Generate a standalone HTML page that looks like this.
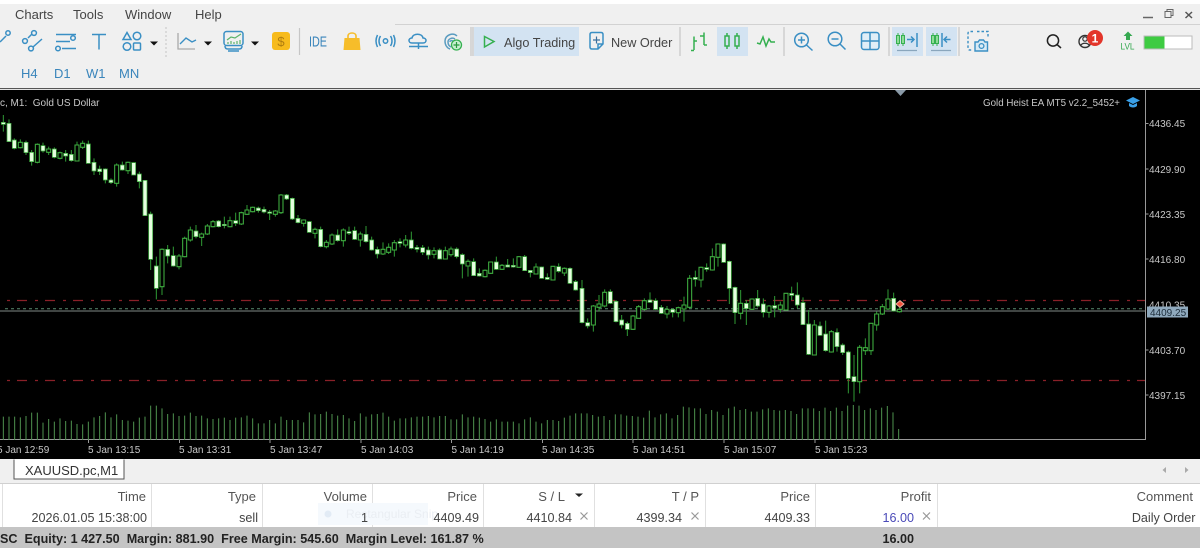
<!DOCTYPE html>
<html><head><meta charset="utf-8"><title>MT5</title>
<style>
html,body{margin:0;padding:0;width:1200px;height:551px;overflow:hidden;background:#fff}
svg{display:block;filter:blur(.35px)}
text{font-family:"Liberation Sans",sans-serif}
.m{font-size:13px;fill:#444}
.tf{font-size:13px;fill:#3a85bb}
.c{font-size:10px;fill:#c8c8c8}
.h{font-size:13px;fill:#555;text-anchor:end}
.r{font-size:12.6px;fill:#444;text-anchor:end}
.s{font-size:12.6px;font-weight:bold;fill:#222}
.x{stroke:#999;stroke-width:1.2;fill:none}
.b{fill:none;stroke:#3a8fc4;stroke-width:1.5}
.g{fill:none;stroke:#35b050;stroke-width:1.5}
.w{fill:none;stroke:#2f9a35;stroke-width:3}
.f{fill:#e6ffe0;stroke:#3fae40;stroke-width:2.2}
.o{fill:#000;stroke:#3fae40;stroke-width:3.2}
.sep{stroke:#c6c6c6;stroke-width:1.2}
</style></head><body>
<svg width="1200" height="551" viewBox="0 0 1200 551" xmlns="http://www.w3.org/2000/svg">
<rect width="1200" height="551" fill="#fff"/>
<rect y="4" width="1200" height="84" fill="#f0f0f0"/>
<path d="M395 24.500H1200" stroke="#d2d2d2"/>
<text class="m" x="15" y="19">Charts</text><text class="m" x="73" y="19">Tools</text><text class="m" x="125" y="19">Window</text><text class="m" x="195" y="19">Help</text>
<path d="M1143 17.500h10" stroke="#666" stroke-width="1.500"/>
<path d="M1165 11.500h6v6h-6zM1167 11v-1.500h6v6h-2" fill="none" stroke="#666"/>
<path d="M1185.500 12l6.500 6M1192 12l-6.500 6" stroke="#555" stroke-width="1.500"/>

<rect x="474" y="27" width="105" height="29" fill="#d3e3f2"/>
<rect x="717" y="27" width="31" height="29" fill="#d3e3f2"/>
<rect x="892" y="27" width="31" height="29" fill="#d3e3f2"/>
<rect x="926" y="27" width="31" height="29" fill="#d3e3f2"/>

<path class="b" d="M0 42l6-6"/><circle class="b" cx="8" cy="33" r="2.200"/>
<path class="b" d="M28 38l4-4M33 47l9-8"/><circle class="b" cx="34" cy="33" r="2.400"/><circle class="b" cx="25" cy="41" r="2.400"/><circle class="b" cx="31" cy="48.500" r="2.400"/>
<path class="b" d="M56 34.500h20M56 41.500h14M62 48.500h14"/><circle class="b" cx="73" cy="38" r="2.300"/><circle class="b" cx="58" cy="48.500" r="2.300"/>
<path class="b" d="M92 34.500h14M99 34.500v15"/>
<path class="b" d="M127 32.500l4 7h-8z"/><circle class="b" cx="137" cy="36" r="3.800"/><circle class="b" cx="127" cy="46.500" r="3.800"/><rect class="b" x="133.500" y="43" width="7" height="7" rx="1"/>
<path d="M150 41.500h8l-4 4z" fill="#111"/>
<path d="M166 27V57" stroke="#c4c4c4" stroke-dasharray="2 2"/>
<path d="M178 33V49H195" fill="none" stroke="#aaa" stroke-width="1.300"/>
<path d="M180 44l6-6 6 4 4-2" fill="none" stroke="#3a8fc4" stroke-width="1.400"/>
<path d="M204 41.500h8l-4 4z" fill="#111"/>
<rect class="b" x="224" y="31.500" width="19" height="14" rx="2.500" fill="#e8f4fa"/>
<path class="b" d="M225 46c0 2 1 3 3 3h11c2 0 3-1 3-3M228 51h11"/>
<path d="M227 40l4-3 4 1 6-4" fill="none" stroke="#5cb46a" stroke-width="1.200"/>
<path d="M228 44v-2M231 44v-3M234 44v-2M237 44v-3M240 44v-4" stroke="#5cb46a" stroke-width="1.200"/>
<path d="M251 41.500h8l-4 4z" fill="#111"/>
<rect x="272" y="32" width="18" height="18" rx="3" fill="#f7bb1c"/>
<text x="281" y="46" font-size="13" text-anchor="middle" fill="#b07d10">$</text>
<path class="sep" d="M299.500 28V55"/>
<text x="309" y="46.500" font-size="15" textLength="18" lengthAdjust="spacingAndGlyphs" fill="#3a85bb">IDE</text>
<path d="M344.500 38h15l1 12h-17z" fill="#f6bd2a"/><path d="M348 39v-3c0-4 8-4 8 0v3" fill="none" stroke="#f6bd2a" stroke-width="1.600"/>
<circle class="b" cx="385.500" cy="41" r="2.200"/>
<path class="b" d="M380.500 36c-2 3-2 7 0 10M390.500 36c2 3 2 7 0 10M377.500 35c-2 4-2 8 0 12M393.500 35c2 4 2 8 0 12" stroke-width="1.200"/>
<path class="b" d="M412 43c-4 0-4-5 0-5 1-5 10-5 11 0 4 0 4 5 0 5zM409 46.500h19M418.500 43v6"/>
<path d="M457 36c-4-4-12-1-12 5 0 4 2 7 5 8M455 39c-3-2-7 0-7 3 0 2 1 4 3 5M453 41c-2-1-3 0-3 1" fill="none" stroke="#5a9cc0" stroke-width="1.500"/>
<circle cx="456.500" cy="45" r="5" fill="#c8efd0" stroke="#35b050" stroke-width="1.300"/><path d="M456.500 42v6M453.500 45h6" stroke="#2a9a40" stroke-width="1.200"/>
<path class="sep" d="M471 27V56M473 27V56"/>
<path d="M484.500 36.500l9.500 5-9.500 5.500z" fill="none" stroke="#35b050" stroke-width="1.500"/>
<text x="504" y="47" font-size="12.700" fill="#444">Algo Trading</text>
<path class="b" d="M603 44V34.500q0-2-2-2h-9q-2 0-2 2V47q0 2 2 2h6zM603 44h-5v5"/><path d="M596.500 36.500v7M593 40h7" stroke="#3a6f9c" stroke-width="1.200"/>
<text x="611" y="47" font-size="12.700" fill="#444">New Order</text>
<path class="sep" d="M680 27V56"/>
<path class="g" d="M694 36.500V50M691 50.500h3M694 41h3M704 32.500V45M700 36h4M704 45h3"/>
<path d="M727 33v3M727 46v3M737 33v3M737 46v3" stroke="#35b050" stroke-width="1.500"/><rect class="g" x="725" y="36" width="4" height="10" fill="none"/><rect class="g" x="735" y="36" width="4" height="10"/>
<path class="g" d="M757 43l3 1 3-7 3 9 3-7 2 3 4 0"/>
<path class="sep" d="M784 27V56"/>
<circle class="b" cx="801.500" cy="40" r="6.800"/><path class="b" d="M806.500 45l6 5.500M798 40h7M801.500 36.500v7"/>
<circle class="b" cx="835" cy="39" r="6.800"/><path class="b" d="M840 44l5.500 5.500M831.500 39h7"/>
<rect x="861.500" y="32.500" width="17.500" height="17" rx="2.500" fill="#e0eef7" stroke="#3a8fc4" stroke-width="1.500"/><path class="b" d="M870 33v16M862 41h17"/>
<path class="sep" d="M889 27V56"/>
<path d="M898 33v13M903 33v13" stroke="#35b050" stroke-width="1"/><rect x="896.500" y="35.500" width="3" height="8" fill="#8fdc98" stroke="#35b050"/><rect x="901.500" y="35.500" width="3" height="8" fill="#8fdc98" stroke="#35b050"/>
<path class="b" d="M907 39.500h7M911 36.500l3 3-3 3M917 33V47" stroke-width="1.300"/><path d="M897 50.500h20" stroke="#8aa6bd" stroke-width="1.200"/>
<path d="M933 33v13M937 33v13" stroke="#35b050" stroke-width="1"/><rect x="931.500" y="35.500" width="3" height="8" fill="#8fdc98" stroke="#35b050"/><rect x="935.500" y="35.500" width="3" height="8" fill="#8fdc98" stroke="#35b050"/>
<path class="b" d="M942 33V47M950.500 39.500h-6.500M947 36.500l-3 3 3 3" stroke-width="1.300"/><path d="M931 50.500h20" stroke="#8aa6bd" stroke-width="1.200"/>
<path class="sep" d="M959 27V56"/>
<path d="M973 31.500h-3q-2 0-2 2V48q0 2 2 2h3M977 31.500h11V38" fill="none" stroke="#3a8fc4" stroke-width="1.400" stroke-dasharray="2.500 2"/>
<path d="M975 42h3l1.500-2h4l1.500 2h2.500v9H975z" fill="#d8eaf5" stroke="#3a8fc4" stroke-width="1.400"/><circle cx="981.500" cy="46" r="2.400" fill="none" stroke="#3a8fc4" stroke-width="1.300"/>
<circle cx="1053" cy="40.500" r="5.600" fill="none" stroke="#222" stroke-width="1.500"/><path d="M1057 44.500l4 3.500" stroke="#222" stroke-width="1.500"/>
<circle cx="1085" cy="41.500" r="6" fill="none" stroke="#333" stroke-width="1.400"/><circle cx="1085" cy="39" r="2.200" fill="none" stroke="#333" stroke-width="1.200"/><path d="M1080.500 45.500c2-3 7-3 9 0" fill="none" stroke="#333" stroke-width="1.200"/>
<circle cx="1095" cy="38" r="8" fill="#e3352a"/><text x="1095" y="42.500" font-size="12" font-weight="bold" text-anchor="middle" fill="#fff">1</text>
<path d="M1128 31.500l4.500 4.500h-2.500v4h-4v-4h-2.500z" fill="#35a850"/><text x="1127.500" y="49.500" font-size="9.500" text-anchor="middle" fill="#35a850" textLength="14" lengthAdjust="spacingAndGlyphs">LVL</text>
<rect x="1144" y="36" width="48" height="13" fill="#fff" stroke="#bbb"/><rect x="1144.500" y="36.500" width="20" height="12" fill="#3ecb42"/>

<text class="tf" x="-16" y="78">H1</text><text class="tf" x="21" y="78">H4</text><text class="tf" x="54" y="78">D1</text><text class="tf" x="86" y="78">W1</text><text class="tf" x="119" y="78">MN</text>

<rect y="88" width="1200" height="1" fill="#555"/><rect y="89" width="1200" height="1" fill="#e4e4e4"/>
<rect y="90" width="1200" height="369" fill="#000"/>
<path d="M0 439.500H1145.500V90" fill="none" stroke="#999"/>
<path d="M895 90h11l-5.500 6z" fill="#8a9aa8"/>
<text class="c" x="0" y="106" xml:space="preserve" style="white-space:pre">c, M1:  Gold US Dollar</text>
<text class="c" x="1120" y="106" text-anchor="end" textLength="137" lengthAdjust="spacingAndGlyphs">Gold Heist EA MT5 v2.2_5452+</text>
<path d="M1133 97l7 3.500-7 3.500-7-3.500z" fill="#3aa0e8"/><path d="M1129 103v3c2 2 6 2 8 0v-3l-4 2z" fill="#3aa0e8"/>

<path d="M-11 300.500H1145M-11 380.500H1145" stroke="#8a2028" stroke-width="1.300" stroke-dasharray="10 8 3 7"/>
<path d="M5 308.800H1145" stroke="#5a8a70" stroke-dasharray="3 3"/>
<path d="M0 311H1145" stroke="#7f8a86"/>

<g transform="translate(0,400) scale(.33333)" fill="none" stroke="#4f934f" stroke-width="3">
<path d="M10 50V120M27 50V120M44 50V120M61 52V120M78 48V120M95 38V120M112 38V120M129 68V120M146 57V120M163 65V120M180 55V120M197 63V120M214 62V120M231 72V120M248 73V120M265 65V120M282 52V120M299 48V120M316 37V120M333 52V120M350 43V120M367 60V120M384 62V120M401 65V120M418 53V120M435 50V120M452 17V120M469 17V120M486 25V120M503 42V120M520 40V120M537 48V120M554 47V120M571 38V120M588 48V120M605 47V120M622 55V120M639 57V120M656 55V120M673 53V120M690 60V120M707 53V120M724 52V120M741 47V120M758 55V120M775 70V120M792 70V120M809 60V120M826 70V120M843 50V120M860 60V120M877 60V120M894 60V120M911 67V120M928 37V120M945 43V120M962 42V120M979 35V120M996 42V120M1013 47V120M1030 45V120M1047 55V120M1064 63V120M1081 40V120M1098 50V120M1115 43V120M1132 42V120M1149 38V120M1166 50V120M1183 62V120"/>
<path d="M1200 55V120M1217 55V120M1234 52V120M1251 50V120M1268 50V120M1285 48V120M1302 52V120M1319 48V120M1336 48V120M1353 58V120M1370 58V120M1387 43V120M1404 52V120M1421 50V120M1438 53V120M1455 57V120M1472 65V120M1489 58V120M1506 65V120M1523 65V120M1540 65V120M1557 70V120M1574 58V120M1591 52V120M1608 65V120M1625 70V120M1642 60V120M1659 60V120M1676 63V120M1693 53V120M1710 47V120M1727 40V120M1744 40V120M1761 40V120M1778 45V120M1795 50V120M1812 48V120M1829 60V120M1846 43V120M1863 43V120M1880 47V120M1897 48V120M1914 50V120M1931 53V120M1948 32V120M1965 52V120M1982 43V120M1999 40V120M2016 55V120M2033 45V120M2050 20V120M2067 22V120M2084 25V120M2101 25V120M2118 42V120M2135 30V120M2152 35V120M2169 45V120M2186 25V120M2203 20V120M2220 30V120M2237 27V120M2254 35V120M2271 35V120M2288 28V120M2305 25V120M2322 30V120M2339 32V120M2356 30V120M2373 33V120M2390 42V120"/>
<path d="M2407 25V120M2424 25V120M2441 25V120M2458 33V120M2475 23V120M2492 33V120M2509 23V120M2526 33V120M2543 17V120M2560 15V120M2577 17V120M2594 30V120M2611 25V120M2628 30V120M2645 23V120M2662 18V120M2679 37V120M2696 87V120"/>
</g>

<g transform="translate(0,100) scale(.33333)">
<path class="w" d="M10 45V95M27 58V125M43 115V148M61 118V145M78 122V165M95 150V197M112 130V190M129 128V158M146 140V165M163 142V175M180 155V178M197 150V185M214 150V185M231 125V183M248 122V147M265 122V190M282 175V225M299 197V225M316 205V250M333 235V252M350 190V260M367 185V212M384 185V222M401 187V225M418 215V265M435 240V347M452 335V510M469 470V598M486 445V585M503 435V490M520 440V500M537 462V508M554 410V472M571 380V425M588 375V415M605 398V438M622 372V405M639 360V382M656 360V382M673 350V385M690 350V382M707 338V378M724 335V375M741 315V345M758 320V337M775 320V338M792 320V340M809 330V360M826 330V350M843 282V342M860 282V300M877 293V360M894 345V370"/>
<path class="f" d="M4 67h12V73h-12zM21 70h12V125h-12zM37 120h12V145h-12zM72 127h12V158h-12zM89 157h12V185h-12zM123 137h12V153h-12zM157 147h12V172h-12zM191 160h12V168h-12zM208 163h12V182h-12zM259 132h12V190h-12zM276 187h12V213h-12zM293 207h12V215h-12zM310 207h12V240h-12zM327 240h12V248h-12zM361 195h12V210h-12zM395 188h12V225h-12zM412 222h12V245h-12zM429 241h12V347h-12zM446 342h12V478h-12zM463 498h12V565h-12zM497 448h12V468h-12zM514 467h12V498h-12zM582 393h12V410h-12zM650 363h12V380h-12zM667 373h12V377h-12zM701 362h12V370h-12zM769 324h12V332h-12zM786 328h12V336h-12zM803 336h12V340h-12zM854 285h12V297h-12zM871 295h12V357h-12zM888 355h12V368h-12z"/>
<path class="o" d="M55 127h12V143h-12zM106 133h12V187h-12zM140 147h12V157h-12zM174 158h12V175h-12zM225 135h12V183h-12zM242 130h12V142h-12zM344 195h12V250h-12zM378 187h12V212h-12zM480 448h12V560h-12zM531 468h12V500h-12zM548 415h12V470h-12zM565 390h12V420h-12zM599 402h12V412h-12zM616 378h12V402h-12zM633 365h12V380h-12zM684 362h12V380h-12zM718 338h12V372h-12zM735 330h12V343h-12zM752 322h12V335h-12zM820 333h12V343h-12zM837 285h12V338h-12z"/>
</g>

<g transform="translate(300,190) scale(.33333)">
<path class="w" d="M11 88V110M28 93V128M45 113V145M62 110V172M79 150V175M96 130V165M113 118V155M130 115V170M147 110V135M164 110V150M181 125V170M198 108V158M215 140V182M232 170V205M249 157V195M266 160V192M283 150V200M300 145V172M317 135V172M334 125V178M351 165V187M368 165V195M385 170V208M402 172V205M419 175V208M436 170V208M453 170V200M470 172V205M487 190V265M504 208V260M521 205V258M538 235V260M555 238V262M572 215V252M589 200V240M606 222V240M623 207V232M640 205V233M657 198V232M674 195V243M691 240V262M708 220V253M725 230V266M742 250V270M759 228V270M776 220V248M793 232V258M810 232V282M827 270V302"/>
<path class="f" d="M22 95h12V127h-12zM56 118h12V170h-12zM107 135h12V152h-12zM141 125h12V130h-12zM158 122h12V148h-12zM192 133h12V155h-12zM209 150h12V180h-12zM226 178h12V192h-12zM294 155h12V160h-12zM328 150h12V175h-12zM345 172h12V178h-12zM362 173h12V187h-12zM379 180h12V195h-12zM413 180h12V207h-12zM464 177h12V200h-12zM481 194h12V222h-12zM515 215h12V257h-12zM532 250h12V258h-12zM583 216h12V238h-12zM617 225h12V231h-12zM634 226h12V231h-12zM668 200h12V242h-12zM685 241h12V248h-12zM719 231h12V265h-12zM736 262h12V268h-12zM770 230h12V244h-12zM804 235h12V280h-12zM821 275h12V300h-12z"/>
<path class="o" d="M5 90h12V100h-12zM39 118h12V130h-12zM73 157h12V170h-12zM90 135h12V162h-12zM124 120h12V152h-12zM175 132h12V150h-12zM243 178h12V192h-12zM260 172h12V187h-12zM277 158h12V180h-12zM311 150h12V165h-12zM396 182h12V193h-12zM430 182h12V207h-12zM447 177h12V194h-12zM498 214h12V228h-12zM549 241h12V260h-12zM566 216h12V250h-12zM600 226h12V238h-12zM651 200h12V232h-12zM702 231h12V252h-12zM753 229h12V270h-12zM787 235h12V249h-12z"/>
</g>

<g transform="translate(580,230) scale(.33333)">
<path class="w" d="M6 150V280M23 265V295M40 225V305M57 195V245M74 178V232M91 178V222M108 210V277M125 255V295M142 275V318M159 255V300M176 225V265M193 205V242M210 187V218M227 205V240M244 225V252M261 228V265M278 235V262M295 230V262M312 200V275M329 135V235M346 122V170M363 110V172M380 100V125M397 55V122M414 40V110M431 40V98M448 92V222M465 170V282M482 180V268M499 210V285M516 205V240M533 180V232M550 205V262M567 225V263M584 198V262M601 215V248M618 190V242M635 170V210M652 157V235M669 202V285M686 240V375M703 270V375M720 275V318M737 272V365M754 300V368M771 295V365M788 340V375M805 362V490M822 375V515M839 345V490M856 325V375M873 280V375M890 245V302M907 222V255M924 178V240M941 188V245M958 225V248"/>
<path class="f" d="M0 175h12V278h-12zM17 278h12V288h-12zM85 185h12V220h-12zM102 214h12V275h-12zM119 270h12V285h-12zM136 280h12V298h-12zM204 210h12V217h-12zM221 212h12V238h-12zM238 232h12V250h-12zM272 238h12V247h-12zM340 142h12V148h-12zM374 113h12V118h-12zM425 42h12V97h-12zM442 94h12V175h-12zM459 172h12V248h-12zM493 220h12V236h-12zM527 205h12V228h-12zM544 222h12V247h-12zM578 227h12V234h-12zM629 190h12V196h-12zM646 195h12V225h-12zM663 218h12V284h-12zM680 282h12V373h-12zM714 288h12V316h-12zM731 312h12V362h-12zM765 307h12V350h-12zM782 345h12V368h-12zM799 366h12V445h-12zM816 440h12V455h-12zM935 205h12V243h-12z"/>
<path class="o" d="M34 228h12V285h-12zM51 222h12V232h-12zM68 187h12V228h-12zM153 258h12V298h-12zM170 230h12V265h-12zM187 212h12V238h-12zM255 238h12V252h-12zM289 233h12V248h-12zM306 225h12V237h-12zM323 145h12V232h-12zM357 112h12V150h-12zM391 80h12V120h-12zM408 42h12V82h-12zM476 220h12V250h-12zM510 207h12V238h-12zM561 228h12V247h-12zM595 225h12V238h-12zM612 190h12V240h-12zM697 285h12V375h-12zM748 305h12V366h-12zM833 352h12V455h-12zM850 353h12V362h-12zM867 280h12V362h-12zM884 252h12V285h-12zM901 230h12V252h-12zM918 207h12V237h-12zM952 238h12V245h-12z"/>
<path d="M960 212l12 10-12 10-12-10z" fill="#f0503a" stroke="#e8b0a0" stroke-width="3"/>
</g>

<path d="M1145.500 123.500h3M1145.500 169h3M1145.500 214h3M1145.500 259h3M1145.500 350h3M1145.500 395h3" stroke="#999"/>
<text class="c" x="1149" y="127">4436.45</text><text class="c" x="1149" y="173">4429.90</text><text class="c" x="1149" y="218">4423.35</text><text class="c" x="1149" y="263">4416.80</text><text class="c" x="1149" y="308.500">4410.35</text><text class="c" x="1149" y="354">4403.70</text><text class="c" x="1149" y="399">4397.15</text>
<rect x="1147" y="306.500" width="41" height="11" fill="#8fa9bd"/>
<text x="1150" y="316" font-size="10" fill="#1c2c3a">4409.25</text>

<path d="M-3 440v3M88.500 440v3M179.500 440v3M270 440v3M361 440v3M451.500 440v3M542.500 440v3M633 440v3M724 440v3M815 440v3" stroke="#999"/>
<text class="c" x="-3" y="453">5 Jan 12:59</text><text class="c" x="88" y="453">5 Jan 13:15</text><text class="c" x="179" y="453">5 Jan 13:31</text><text class="c" x="270" y="453">5 Jan 13:47</text><text class="c" x="361" y="453">5 Jan 14:03</text><text class="c" x="451.500" y="453">5 Jan 14:19</text><text class="c" x="542" y="453">5 Jan 14:35</text><text class="c" x="633" y="453">5 Jan 14:51</text><text class="c" x="724" y="453">5 Jan 15:07</text><text class="c" x="815" y="453">5 Jan 15:23</text>

<rect y="459" width="1200" height="25" fill="#f0f0f0"/>
<path d="M14 459.500v19.500h110V459.500" fill="#fff" stroke="#555"/>
<text x="25" y="475" font-size="13" fill="#333">XAUUSD.pc,M1</text>
<path d="M1166 467v6l-3.500-3zM1185 467v6l3.500-3z" fill="#aaa"/>

<rect y="483.500" width="1200" height="44" fill="#fff"/>
<path d="M0 483.500H1200" stroke="#d0d0d0"/>
<path d="M2.500 484V527M151.500 484V527M262.500 484V527M372.500 484V527M483.500 484V527M594.500 484V527M705.500 484V527M815.500 484V527M937.500 484V527" stroke="#e0e0e0"/>
<rect x="318" y="503" width="110" height="22" fill="#f5f9fd"/>
<circle cx="328" cy="514" r="3.500" fill="#e2ebf5"/>
<text x="346" y="518" font-size="12" fill="#eaeef3">Rectangular Snip</text>
<text class="h" x="146" y="501">Time</text><text class="h" x="256" y="501">Type</text><text class="h" x="367" y="501">Volume</text><text class="h" x="477" y="501">Price</text><text class="h" x="565" y="501">S / L</text><path d="M575 493.500h8l-4 3.500z" fill="#222"/><text class="h" x="699" y="501">T / P</text><text class="h" x="810" y="501">Price</text><text class="h" x="931" y="501">Profit</text><text class="h" x="1193" y="501">Comment</text>
<text class="r" x="147" y="522">2026.01.05 15:38:00</text><text class="r" x="258" y="522">sell</text><text class="r" x="368" y="522">1</text><text class="r" x="479" y="522">4409.49</text><text class="r" x="572" y="522">4410.84</text><text class="r" x="682" y="522">4399.34</text><text class="r" x="810" y="522">4409.33</text><text class="r" x="914" y="522" style="fill:#4a4ab8">16.00</text><text class="r" x="1195.500" y="522">Daily Order</text>
<path class="x" d="M580.500 512.500l7 7M587.500 512.500l-7 7M691.500 512.500l7 7M698.500 512.500l-7 7M923 512.500l7 7M930 512.500l-7 7"/>

<rect y="527" width="1200" height="21" fill="#c4c4c4"/>
<text class="s" x="0" y="543" xml:space="preserve" style="white-space:pre">SC  Equity: 1 427.50  Margin: 881.90  Free Margin: 545.60  Margin Level: 161.87 %</text>
<text class="s" x="914" y="543" text-anchor="end">16.00</text>
</svg>
</body></html>
